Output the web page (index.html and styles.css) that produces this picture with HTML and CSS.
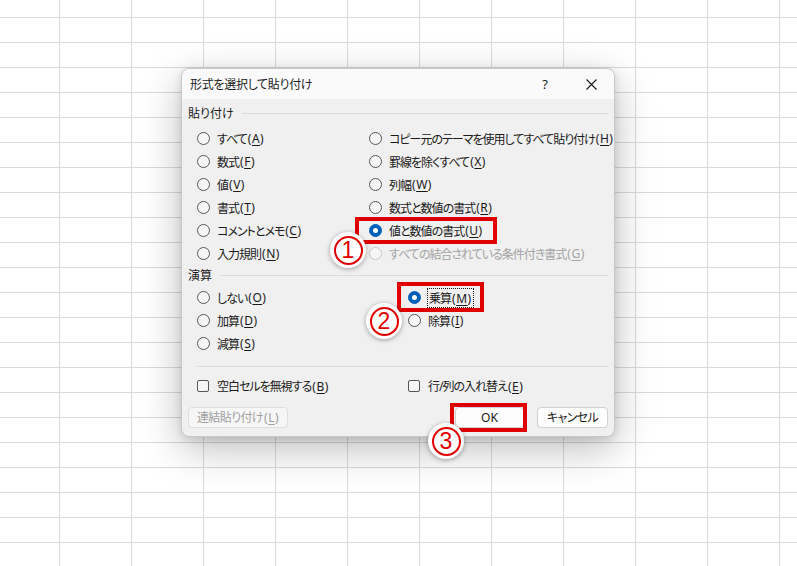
FILE: index.html
```html
<!DOCTYPE html>
<html lang="ja">
<head>
    <meta charset="UTF-8">
    <title>形式を選択して貼り付け</title>
    <link rel="stylesheet" href="styles.css">
</head>
<body>
    <!-- 形式を選択して貼り付け ダイアログ -->
    <div class="dialog">
        <div class="titlebar">
            <span class="title">形式を選択して貼り付け</span>
            <span class="tb-btn">?</span>
            <span class="tb-btn">
                <svg width="11" height="11" viewBox="0 0 11 11"><path d="M0.5 0.5L10.5 10.5M10.5 0.5L0.5 10.5" stroke="#1a1a1a" stroke-width="1.1" fill="none"/></svg>
            </span>
        </div>

        <div class="content">
            <div class="group-label"><span>貼り付け</span><i></i></div>
            <div class="options paste">
                <div class="opt"><span class="radio"></span>すべて<span class="key">(<u>A</u>)</span></div>
                <div class="opt"><span class="radio"></span>数式<span class="key">(<u>F</u>)</span></div>
                <div class="opt"><span class="radio"></span>値<span class="key">(<u>V</u>)</span></div>
                <div class="opt"><span class="radio"></span>書式<span class="key">(<u>T</u>)</span></div>
                <div class="opt"><span class="radio"></span>コメントとメモ<span class="key">(<u>C</u>)</span></div>
                <div class="opt"><span class="radio"></span>入力規則<span class="key">(<u>N</u>)</span></div>
                <div class="opt"><span class="radio"></span>コピー元のテーマを使用してすべて貼り付け<span class="key">(<u>H</u>)</span></div>
                <div class="opt"><span class="radio"></span>罫線を除くすべて<span class="key">(<u>X</u>)</span></div>
                <div class="opt"><span class="radio"></span>列幅<span class="key">(<u>W</u>)</span></div>
                <div class="opt"><span class="radio"></span>数式と数値の書式<span class="key">(<u>R</u>)</span></div>
                <div class="opt"><span class="radio checked"></span>値と数値の書式<span class="key">(<u>U</u>)</span></div>
                <div class="opt disabled"><span class="radio"></span>すべての結合されている条件付き書式<span class="key">(<u>G</u>)</span></div>
            </div>

            <div class="group-label calc"><span>演算</span><i></i></div>
            <div class="options calc-opts">
                <div class="opt"><span class="radio"></span>しない<span class="key">(<u>O</u>)</span></div>
                <div class="opt"><span class="radio"></span>加算<span class="key">(<u>D</u>)</span></div>
                <div class="opt"><span class="radio"></span>減算<span class="key">(<u>S</u>)</span></div>
                <div class="opt"><span class="radio checked"></span><span class="focus">乗算<span class="key">(<u>M</u>)</span></span></div>
                <div class="opt"><span class="radio"></span>除算<span class="key">(<u>I</u>)</span></div>
            </div>

            <div class="separator"></div>

            <div class="checks">
                <div class="opt"><span class="check"></span>空白セルを無視する<span class="key">(<u>B</u>)</span></div>
                <div class="opt"><span class="check"></span>行/列の入れ替え<span class="key">(<u>E</u>)</span></div>
            </div>

            <div class="buttons">
                <button class="btn link" disabled>連結貼り付け<span class="key">(<u>L</u>)</span></button>
                <button class="btn ok">OK</button>
                <button class="btn cancel">キャンセル</button>
            </div>
        </div>

        <!-- 手順の注釈 -->
        <div class="mark mark-1"></div>
        <div class="mark mark-2"></div>
        <div class="mark mark-3"></div>
        <div class="step step-1"><span>1</span></div>
        <div class="step step-2"><span>2</span></div>
        <div class="step step-3"><span>3</span></div>
    </div>
</body>
</html>
```

FILE: styles.css
```css
/* シートのグリッド */
body {
    margin: 0;
    width: 797px;
    height: 566px;
    overflow: hidden;
    font-family: "Noto Sans", "Noto Sans CJK JP", sans-serif;
    font-feature-settings: "palt";
    font-size: 12px;
    color: #1a1a1a;
    background-color: #ffffff;
    background-image:
        linear-gradient(to right, #dadada 1px, transparent 1px),
        linear-gradient(to bottom, #dadada 1px, transparent 1px);
    background-size: 72px 25px;
    background-position: 59px 17px;
    padding: 68px 0 0 181px;
    box-sizing: border-box;
}

/* ダイアログ */
.dialog {
    position: relative;
    width: 434px;
    height: 369px;
    box-sizing: border-box;
    background: #f0f0f0;
    border: 1px solid #c8c8c8;
    border-radius: 8px;
    box-shadow: 0 12px 40px rgba(0, 0, 0, 0.26), 0 2px 8px rgba(0, 0, 0, 0.12);
}
.titlebar {
    height: 30px;
    display: flex;
    align-items: center;
    background: #fafafa;
    border-radius: 8px 8px 0 0;
    padding-left: 8px;
    letter-spacing: -0.3px;
}
.title {
    flex: 1;
}
.tb-btn {
    width: 46px;
    height: 30px;
    display: flex;
    align-items: center;
    justify-content: center;
    font-size: 13px;
}
.content {
    padding: 0 6px 0 6px;
}

/* グループ見出し */
.group-label {
    display: flex;
    align-items: center;
    height: 16px;
    margin-top: 6px;
}
.group-label i {
    flex: 1;
    height: 1px;
    background: #dcdcdc;
    margin-left: 8px;
}
.group-label.calc {
    margin-top: 2px;
}

/* ラジオボタン */
.options {
    display: grid;
    grid-auto-flow: column;
    padding-left: 9px;
}
.paste {
    grid-template-columns: 172px 1fr;
    grid-template-rows: repeat(6, 23px);
    margin-top: 6px;
}
.calc-opts {
    grid-template-columns: 211px 1fr;
    grid-template-rows: repeat(3, 23px);
    margin-top: 3px;
}
.opt {
    display: flex;
    align-items: center;
    white-space: nowrap;
    letter-spacing: -1px;
}
.key {
    letter-spacing: 0.5px;
    margin-left: 1px;
}
.key u {
    text-underline-offset: 2px;
}
.radio {
    width: 13px;
    height: 13px;
    box-sizing: border-box;
    border: 1px solid #575757;
    border-radius: 50%;
    background: #f6f6f6;
    margin-right: 7px;
    position: relative;
    flex-shrink: 0;
}
.radio.checked {
    border-color: #005fb8;
    background: #005fb8;
}
.radio.checked::after {
    content: "";
    position: absolute;
    left: 3px;
    top: 3px;
    width: 5px;
    height: 5px;
    border-radius: 50%;
    background: #ffffff;
}
.opt.disabled {
    color: #a3a3a3;
}
.opt.disabled .radio {
    border-color: #c8c8c8;
}
.focus {
    outline: 1px dotted #1a1a1a;
    outline-offset: 0;
    padding: 0 1px;
}

.separator {
    height: 1px;
    background: #dcdcdc;
    margin: 11px 0 0 9px;
}

/* チェックボックス */
.checks {
    display: grid;
    grid-template-columns: 211px 1fr;
    padding-left: 9px;
    height: 20px;
    margin-top: 9px;
}
.check {
    width: 12px;
    height: 12px;
    box-sizing: border-box;
    border: 1px solid #575757;
    border-radius: 2px;
    background: #f6f6f6;
    margin-right: 8px;
}

/* ボタン */
.buttons {
    display: flex;
    margin-top: 11px;
}
.btn {
    height: 21px;
    box-sizing: border-box;
    font-family: inherit;
    font-size: 12px;
    font-feature-settings: "palt";
    letter-spacing: -0.6px;
    color: #1a1a1a;
    background: #fdfdfd;
    border: 1px solid #d0d0d0;
    border-radius: 4px;
    padding: 0;
    line-height: 19px;
}
.btn.link {
    width: 100px;
    color: #a0a0a0;
    background: #f6f6f6;
    border-color: #dedede;
}
.btn.ok {
    width: 69px;
    margin-left: auto;
    letter-spacing: 0;
}
.btn.cancel {
    width: 71px;
    margin-left: 13px;
}

/* 注釈の赤枠と番号 */
.mark {
    position: absolute;
    border: 4px solid #e00000;
    box-sizing: border-box;
}
.mark-1 {
    left: 173px;
    top: 148px;
    width: 142px;
    height: 27px;
}
.mark-2 {
    left: 215px;
    top: 213px;
    width: 87px;
    height: 30px;
}
.mark-3 {
    left: 268px;
    top: 334px;
    width: 77px;
    height: 29px;
}
.step {
    position: absolute;
    width: 36px;
    height: 36px;
    border-radius: 50%;
    background: #ffffff;
    box-shadow: 0 1px 5px rgba(0, 0, 0, 0.35);
    display: flex;
    align-items: center;
    justify-content: center;
}
.step span {
    width: 29px;
    height: 29px;
    box-sizing: border-box;
    border: 2px solid #e00000;
    border-radius: 50%;
    color: #e00000;
    font-family: "Liberation Sans", sans-serif;
    font-size: 23px;
    line-height: 25px;
    text-align: center;
}
.step-1 {
    left: 148px;
    top: 163px;
}
.step-2 {
    left: 184px;
    top: 234px;
}
.step-3 {
    left: 246px;
    top: 354px;
}
```
